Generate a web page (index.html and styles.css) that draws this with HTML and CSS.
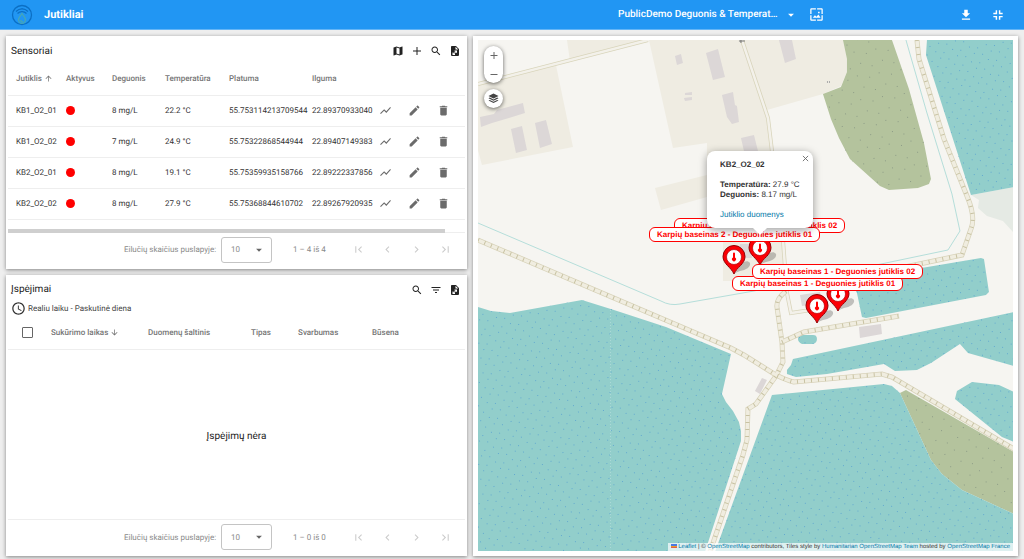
FILE: index.html
```html
<!DOCTYPE html>
<html lang="lt">
<head>
    <meta charset="UTF-8">
    <meta name="viewport" content="width=device-width, initial-scale=1.0">
    <title>Jutikliai</title>
    <link rel="stylesheet" href="styles.css">
</head>
<body>
    <!-- shared icons -->
    <svg class="sprite" aria-hidden="true">
        <symbol id="i-map" viewBox="0 0 24 24"><path d="M20.5 3l-.16.03L15 5.1 9 3 3.36 4.9c-.21.07-.36.25-.36.48V20.5c0 .28.22.5.5.5l.16-.03L9 18.9l6 2.1 5.64-1.9c.21-.07.36-.25.36-.48V3.5c0-.28-.22-.5-.5-.5zM15 19l-6-2.11V5l6 2.11V19z"/></symbol>
        <symbol id="i-add" viewBox="0 0 24 24"><path d="M20 13h-7v7h-2v-7H4v-2h7V4h2v7h7v2z"/></symbol>
        <symbol id="i-search" viewBox="0 0 24 24"><path d="M15.5 14h-.79l-.28-.27C15.41 12.59 16 11.11 16 9.5 16 5.91 13.09 3 9.5 3S3 5.91 3 9.5 5.91 16 9.5 16c1.61 0 3.09-.59 4.23-1.57l.27.28v.79l5 4.99L20.49 19l-4.99-5zm-6 0C7.01 14 5 11.99 5 9.5S7.01 5 9.5 5 14 7.01 14 9.5 11.99 14 9.5 14z"/></symbol>
        <symbol id="i-export" viewBox="0 0 24 24"><path fill-rule="evenodd" d="M6 2h8l6 6v12a2 2 0 0 1-2 2H6a2 2 0 0 1-2-2V4c0-1.100.9-2 2-2zm7 1.500V9h5.500L13 3.500zM16 11h-5v2h2l-4 4v-2H7v5h5v-2h-1.500l4-4v2H16v-5z"/></symbol>
        <symbol id="i-filter" viewBox="0 0 24 24"><path d="M10 18h4v-2h-4v2zM3 6v2h18V6H3zm3 7h12v-2H6v2z"/></symbol>
        <symbol id="i-chart" viewBox="0 0 24 24"><path d="M3.500 18.490l6-6.010 4 4L22 6.920l-1.410-1.410-7.090 7.970-4-4L2 16.990z"/></symbol>
        <symbol id="i-edit" viewBox="0 0 24 24"><path d="M3 17.250V21h3.750L17.810 9.940l-3.750-3.750L3 17.250zM20.710 7.040c.39-.39.39-1.020 0-1.410l-2.340-2.340c-.39-.39-1.020-.39-1.410 0l-1.830 1.830 3.750 3.750 1.830-1.830z"/></symbol>
        <symbol id="i-delete" viewBox="0 0 24 24"><path d="M6 19c0 1.100.9 2 2 2h8c1.100 0 2-.9 2-2V7H6v12zM19 4h-3.500l-1-1h-5l-1 1H5v2h14V4z"/></symbol>
        <symbol id="i-first" viewBox="0 0 24 24"><path d="M18.410 16.590L13.820 12l4.590-4.590L17 6l-6 6 6 6zM6 6h2v12H6z"/></symbol>
        <symbol id="i-prev" viewBox="0 0 24 24"><path d="M15.410 7.410L14 6l-6 6 6 6 1.410-1.410L10.830 12z"/></symbol>
        <symbol id="i-next" viewBox="0 0 24 24"><path d="M10 6L8.590 7.410 13.170 12l-4.580 4.590L10 18l6-6z"/></symbol>
        <symbol id="i-last" viewBox="0 0 24 24"><path d="M5.590 7.410L10.180 12l-4.590 4.590L7 18l6-6-6-6zM16 6h2v12h-2z"/></symbol>
        <symbol id="i-up" viewBox="0 0 24 24"><path d="M4 12l1.410 1.410L11 7.830V20h2V7.830l5.580 5.590L20 12l-8-8-8 8z"/></symbol>
        <symbol id="i-down" viewBox="0 0 24 24"><path d="M20 12l-1.410-1.410L13 16.170V4h-2v12.170l-5.580-5.590L4 12l8 8 8-8z"/></symbol>
        <symbol id="i-clock" viewBox="0 0 24 24"><path d="M11.990 2C6.470 2 2 6.480 2 12s4.470 10 9.990 10C17.520 22 22 17.520 22 12S17.520 2 11.990 2zM12 20c-4.420 0-8-3.580-8-8s3.580-8 8-8 8 3.580 8 8-3.580 8-8 8zm.5-13H11v6l5.250 3.150.75-1.230-4.500-2.670z"/></symbol>
        <symbol id="i-caret" viewBox="0 0 24 24"><path d="M5 9l7 7 7-7z"/></symbol>
        <symbol id="pin" viewBox="0 0 32 30">
            <path fill="#000" opacity=".22" d="M13 28l7-9c2-3 6-4 8-1 1 4-4 7-10 8z"/>
            <path fill="#fb0006" stroke="#8e0005" stroke-width="1" d="M12 29C9 22 1 19 1 11.500a11 11 0 0 1 22 0c0 7.500-8 10.500-11 17.500z"/>
            <circle cx="12" cy="12" r="7.500" fill="#fff" stroke="#b00005" stroke-width=".7"/>
            <path fill="#f00" d="M11 8.500a1 1 0 0 1 2 0v4a2 2 0 1 1-2 0z"/>
        </symbol>
    </svg>

    <header class="topbar">
        <svg class="logo" viewBox="0 0 22 22">
            <g fill="none" stroke="#0b6fc4">
                <circle cx="11" cy="11" r="9.500" stroke-width="1.300"/>
                <path stroke-width="1.200" d="M5 7.500c3.500-3.500 8.500-3.500 12 0M6.500 9.500c2.500-2.600 6.500-2.600 9 0M8.500 5.200c1.800-.6 3.600-.6 5.200 0"/>
                <path stroke="#45a6b8" stroke-width="1.300" d="M11 9.500c1.500 2.500 3.500 4.200 3.500 6.300a3.500 3.500 0 0 1-7 0c0-2.100 2-3.800 3.500-6.300zM9.500 16c.3 1.300 1.500 1.800 2.500 1.500"/>
            </g>
        </svg>
        <h1>Jutikliai</h1>
        <div class="tools">
            <div class="project">
                <select aria-label="Projektas">
                    <option>PublicDemo Deguonis &amp; Temperat…</option>
                </select>
                <svg><use href="#i-caret"/></svg>
            </div>
            <button aria-label="Vaizdas">
                <svg viewBox="0 0 24 24"><path d="M4 2h7v2H4v7H2V4c0-1.100.9-2 2-2zm9 0h7c1.100 0 2 .9 2 2v7h-2V4h-7zM2 13h2v7h7v2H4c-1.100 0-2-.9-2-2zm18 0h2v7c0 1.100-.9 2-2 2h-7v-2h7zM6 17l3.500-4 2.500 2.500 3-3.500 3.500 5zM14.500 7.500h2.500V10h-2.500z"/></svg>
            </button>
            <button class="download" aria-label="Atsisiųsti">
                <svg viewBox="0 0 24 24"><path d="M5 20h14v-2H5v2zM19 9h-4V3H9v6H5l7 7 7-7z"/></svg>
            </button>
            <button class="exit" aria-label="Išeiti iš viso ekrano">
                <svg viewBox="0 0 24 24"><path d="M4 16h4v4h2.500v-6.500H4zM8 8H4v2.500h6.500V4H8zm5.500 12H16v-4h4v-2.500h-6.500zM16 8V4h-2.500v6.500H20V8z"/></svg>
            </button>
        </div>
    </header>

    <main>
        <div class="left">
            <section class="panel sensors">
                <div class="panel-head">
                    <h2>Sensoriai</h2>
                    <button aria-label="Žemėlapis"><svg><use href="#i-map"/></svg></button>
                    <button aria-label="Pridėti"><svg><use href="#i-add"/></svg></button>
                    <button aria-label="Ieškoti"><svg><use href="#i-search"/></svg></button>
                    <button aria-label="Eksportuoti"><svg><use href="#i-export"/></svg></button>
                </div>
                <table class="sensor-table">
                    <thead>
                        <tr>
                            <th class="c-name">Jutiklis <svg><use href="#i-up"/></svg></th>
                            <th class="c-active">Aktyvus</th>
                            <th class="c-oxygen">Deguonis</th>
                            <th class="c-temp">Temperatūra</th>
                            <th class="c-lat">Platuma</th>
                            <th class="c-lng">Ilguma</th>
                            <th class="c-actions"></th>
                        </tr>
                    </thead>
                    <tbody id="sensor-rows"></tbody>
                </table>
                <div class="scrollbar"><div class="thumb"></div></div>
                <div class="pager">
                    <label for="rows1">Eilučių skaičius puslapyje:</label>
                    <div class="rows">
                        <select id="rows1"><option>10</option></select>
                        <svg><use href="#i-caret"/></svg>
                    </div>
                    <span class="range">1 – 4 iš 4</span>
                    <button aria-label="Pirmas" disabled><svg><use href="#i-first"/></svg></button>
                    <button aria-label="Ankstesnis" disabled><svg><use href="#i-prev"/></svg></button>
                    <button aria-label="Kitas" disabled><svg><use href="#i-next"/></svg></button>
                    <button aria-label="Paskutinis" disabled><svg><use href="#i-last"/></svg></button>
                </div>
            </section>

            <section class="panel alerts">
                <div class="panel-head">
                    <h2>Įspėjimai</h2>
                    <button aria-label="Ieškoti"><svg><use href="#i-search"/></svg></button>
                    <button aria-label="Filtruoti"><svg><use href="#i-filter"/></svg></button>
                    <button aria-label="Eksportuoti"><svg><use href="#i-export"/></svg></button>
                </div>
                <div class="period"><svg><use href="#i-clock"/></svg>Realiu laiku - Paskutinė diena</div>
                <table class="alert-table">
                    <thead>
                        <tr>
                            <th class="a-check"><input type="checkbox" aria-label="Pažymėti visus"></th>
                            <th class="a-time">Sukūrimo laikas <svg><use href="#i-down"/></svg></th>
                            <th class="a-source">Duomenų šaltinis</th>
                            <th class="a-type">Tipas</th>
                            <th class="a-level">Svarbumas</th>
                            <th class="a-state">Būsena</th>
                        </tr>
                    </thead>
                </table>
                <p class="empty">Įspėjimų nėra</p>
                <div class="pager">
                    <label for="rows2">Eilučių skaičius puslapyje:</label>
                    <div class="rows">
                        <select id="rows2"><option>10</option></select>
                        <svg><use href="#i-caret"/></svg>
                    </div>
                    <span class="range">1 – 0 iš 0</span>
                    <button aria-label="Pirmas" disabled><svg><use href="#i-first"/></svg></button>
                    <button aria-label="Ankstesnis" disabled><svg><use href="#i-prev"/></svg></button>
                    <button aria-label="Kitas" disabled><svg><use href="#i-next"/></svg></button>
                    <button aria-label="Paskutinis" disabled><svg><use href="#i-last"/></svg></button>
                </div>
            </section>
        </div>

        <section class="panel map-panel">
            <div class="map">
                <svg class="tiles" viewBox="478 40 535 511" preserveAspectRatio="xMidYMid slice">
                    <defs>
                        <pattern id="dots" width="17" height="15" patternUnits="userSpaceOnUse" patternTransform="rotate(-8)">
                            <g fill="#62a9cf">
                                <rect x="1" y="1" width="1" height="1"/>
                                <rect x="9" y="3" width="1" height="1"/>
                                <rect x="5" y="8" width="1" height="1"/>
                                <rect x="13" y="10" width="1" height="1"/>
                            </g>
                        </pattern>
                        <pattern id="trees" width="22" height="24" patternUnits="userSpaceOnUse" patternTransform="rotate(-8)">
                            <g fill="#8c9b86">
                                <rect x="2" y="2" width="1" height="1"/>
                                <rect x="14" y="5" width="1" height="1"/>
                                <rect x="7" y="14" width="1" height="1"/>
                                <rect x="18" y="18" width="1" height="1"/>
                            </g>
                        </pattern>
                        <path id="channels" d="M927 40H1014V187L971 195 926 55z
                            M478 307L491 311 510 313 582 300 614 310 666 327 731 354 722 394 726 402 733 411 739 422 741 431V441L705 552H478z
                            M772 395L884 384 892 386 900 393 931 460 942 474 962 490 1014 514V552H715z
                            M1014 392L999 385 972 382 957 391 955 399 1002 437 1014 442z
                            M793 359L1014 312V366L968 353 960 344 931 363 917 370 895 371 884 364 827 374 796 377 787 374V370L791 365z
                            M850 280L981 258 984 259 989 292 986 295 866 318 862 317 857 293z
                            M802 335H813Q817 335 817 339T813 344H802Q798 342 798 339T802 335z"/>
                        <path id="woods" d="M843 40H892L909 89 924 143 931 179 929 184 918 188 889 190 880 186 850 159 839 138 831 119 823 94 841 87 847 72V59z
                            M900 393L906 390 1014 452V514L962 490 942 474 931 460z"/>
                        <g id="tracks" fill="none">
                            <path d="M478 240L731 348 744 355 776 375Q786 380 794 382L882 374 892 377 1014 449"/>
                            <path d="M786 291Q776 299 777 307L782 342 783 362 776 376 756 404 748 409 747 440 743 455 710 552"/>
                            <path d="M782 342L804 332 899 316"/>
                            <path d="M917 40L919 59 944 139 967 196Q976 217 971 229L962 255 905 267"/>
                        </g>
                        <g id="lanes" fill="none">
                            <path d="M478 84L648 40"/>
                            <path d="M742 40L768 118 772 151 783 240 787 293 791 313 811 310"/>
                        </g>
                    </defs>
                    <rect x="478" y="40" width="536" height="512" fill="#f6f5f1"/>
                    <path fill="#efece2" d="M567 40H648L570 61z M478 84L556 65 573 147 482 165 478 150z
                        M649 40H843L847 59V72L841 86 823 94 767 110 773 160H707V143L673 148z M655 188L707 175V197L661 210z
                        M723 242H783L786 275 755 281H723z"/>
                    <path fill="#e5eae4" d="M1014 187L971 195 979 200 978 208 987 216 1003 221 1014 233z"/>
                    <use href="#woods" fill="#b4c39d"/>
                    <use href="#woods" fill="url(#trees)"/>
                    <use href="#channels" fill="#92cecb"/>
                    <use href="#channels" fill="url(#dots)"/>
                    <path stroke="#fff" stroke-opacity=".25" stroke-dasharray="1 2" d="M610.500 310V552"/>
                    <path fill="none" stroke="#b5deda" d="M478 223L661 301Q670 306 680 304L754 291 850 270 881 264 948 250 960 231 952 194 927 113 906 40"/>
                    <path fill="#dcd7d7" d="M675 56L681 54 683 63 677 65z M706 53L718 49 725 77 713 80z M722 95L733 92 735 105 737 106 739 122 732 124 727 117z
                        M685 93L692 92V95L685 95z M684 98L692 97V100L685 101z M741 138L754 135 758 151H744z
                        M480 117L494 114 497 110 523 103 525 113 509 118 492 123 481 127z M511 129L522 126 527 150 516 153z M535 123L546 120 552 144 540 148z
                        M779 40H792L796 59 785 63z M800 295L820 292 822 303 802 306z M859 327L881 324 882 334 860 338z M762 378L767 380 760 394 755 391z
                        M740 244H752V258H740z"/>
                    <use href="#lanes" stroke="#d8d4ba" stroke-width="4"/>
                    <use href="#lanes" stroke="#f3f1ea" stroke-width="2.500"/>
                    <use href="#tracks" stroke="#d8d3ba" stroke-width="5"/>
                    <use href="#tracks" stroke="#f0ede0" stroke-width="3.500"/>
                    <use href="#tracks" stroke="#c8c2a2" stroke-width="4" stroke-dasharray="1 6"/>
                    <path stroke="#777" d="M739 41H745M741 40V43"/>
                    <path stroke="#aaa" stroke-width="2" stroke-dasharray="1 1" d="M827 82H831"/>
                </svg>

                <svg class="pin p1"><use href="#pin"/></svg>
                <svg class="pin p2"><use href="#pin"/></svg>
                <svg class="pin p3"><use href="#pin"/></svg>
                <svg class="pin p4"><use href="#pin"/></svg>
                <div class="tag t1">Karpių baseinas 2 - Deguonies jutiklis 02</div>
                <div class="tag t2">Karpių baseinas 2 - Deguonies jutiklis 01</div>
                <div class="tag t4">Karpių baseinas 1 - Deguonies jutiklis 01</div>
                <div class="tag t3">Karpių baseinas 1 - Deguonies jutiklis 02</div>

                <div class="popup">
                    <button class="close" aria-label="Uždaryti"><svg viewBox="0 0 8 8"><path d="M1 1l6 6M7 1L1 7"/></svg></button>
                    <strong>KB2_O2_02</strong>
                    <p><b>Temperatūra:</b> 27.9 °C<br><b>Deguonis:</b> 8.17 mg/L</p>
                    <a href="#">Jutiklio duomenys</a>
                </div>

                <div class="controls">
                    <div class="zoom">
                        <button aria-label="Priartinti"><svg viewBox="0 0 8 8"><path d="M4 1v7M0.500 4.500h7"/></svg></button>
                        <button aria-label="Atitolinti"><svg viewBox="0 0 8 8"><path d="M0.500 4.500h7"/></svg></button>
                    </div>
                    <button class="layers" aria-label="Sluoksniai">
                        <svg viewBox="0 0 24 24"><path d="M12 1l11 5.500L12 12 1 6.500zM4 10l8 4 8-4 3 1.500-11 5.500L1 11.500zM4 15l8 4 8-4 3 1.500L12 22 1 16.500z"/></svg>
                    </button>
                </div>

                <div class="attribution">
                    <svg viewBox="0 0 12 8"><path fill="#4c7be1" d="M0 0h12v4H0z"/><path fill="#ffd500" d="M0 4h12v3H0z"/><path fill="#e0604c" d="M0 5h12v3H0z"/></svg>
                    <a href="#">Leaflet</a> | © <a href="#">OpenStreetMap</a> contributors, Tiles style by <a href="#">Humanitarian OpenStreetMap Team</a> hosted by <a href="#">OpenStreetMap France</a>
                </div>
            </div>
        </section>
    </main>

    <script>
        const sensors = [
            ['KB1_O2_01', '8 mg/L', '22.2 °C', '55.753114213709544', '22.89370933040'],
            ['KB1_O2_02', '7 mg/L', '24.9 °C', '55.75322868544944', '22.89407149383'],
            ['KB2_O2_01', '8 mg/L', '19.1 °C', '55.75359935158766', '22.89222337856'],
            ['KB2_O2_02', '8 mg/L', '27.9 °C', '55.75368844610702', '22.89267920935']
        ];

        document.getElementById('sensor-rows').innerHTML = sensors.map(([name, oxygen, temp, lat, lng]) => `
            <tr>
                <td>${name}</td>
                <td><span class="dot"></span></td>
                <td>${oxygen}</td>
                <td>${temp}</td>
                <td>${lat}</td>
                <td>${lng}</td>
                <td>
                    <div class="actions">
                        <button aria-label="Grafikas"><svg><use href="#i-chart"/></svg></button>
                        <button aria-label="Redaguoti"><svg><use href="#i-edit"/></svg></button>
                        <button aria-label="Ištrinti"><svg><use href="#i-delete"/></svg></button>
                    </div>
                </td>
            </tr>`).join('');
    </script>
</body>
</html>
```
FILE: styles.css
```css
* {
    margin: 0;
    padding: 0;
    box-sizing: border-box;
}

body {
    font-family: Roboto, "Liberation Sans", sans-serif;
    font-size: 8px;
    text-rendering: geometricPrecision;
    color: #333;
    background: #eee;
    min-height: 100vh;
    display: flex;
    flex-direction: column;
}

button {
    display: flex;
    align-items: center;
    justify-content: center;
    background: none;
    border: none;
    color: inherit;
    cursor: pointer;
}

svg {
    display: block;
    fill: currentColor;
}

select {
    appearance: none;
    background: none;
    border: none;
    color: inherit;
    font: inherit;
    text-rendering: inherit;
    outline: none;
}

.sprite {
    position: absolute;
    width: 0;
    height: 0;
}

/* top bar */
.topbar {
    display: flex;
    align-items: center;
    height: 30px;
    padding: 0 19px 0 11px;
    background: #2196f3;
    border-bottom: 1px solid #64b5f6;
    color: #fff;
}

.logo {
    width: 22px;
    height: 22px;
}

.topbar h1 {
    margin-left: 11px;
    font-size: 11px;
    font-weight: 700;
}

.tools {
    flex: 1;
    display: flex;
    align-items: center;
    justify-content: flex-end;
}

.tools button svg {
    width: 15px;
    height: 15px;
}

.project {
    display: flex;
    align-items: center;
    gap: 6px;
    margin-right: 13px;
}

.project select {
    width: 162px;
    font-size: 10px;
    font-weight: 500;
}

.project svg {
    width: 10px;
    height: 10px;
}

.tools .download {
    margin-left: 135px;
}

.tools .exit {
    margin-left: 18px;
}

.tools .download svg,
.tools .exit svg {
    width: 14px;
    height: 14px;
}

/* layout */
main {
    flex: 1;
    display: grid;
    grid-template-columns: 11fr 13fr;
    gap: 6px;
    padding: 6px 6px 3px;
}

.left {
    display: flex;
    flex-direction: column;
    gap: 6px;
}

.panel {
    background: #fff;
    box-shadow: 0 1px 4px rgba(0, 0, 0, 0.45);
}

.sensors,
.alerts {
    display: flex;
    flex-direction: column;
    padding: 0 2px;
}

.alerts {
    flex: 1;
}

.panel-head {
    display: flex;
    align-items: center;
    gap: 7px;
    height: 30px;
    padding: 0 4px 0 3px;
    color: #222;
}

.panel-head h2 {
    flex: 1;
    font-size: 10px;
    font-weight: 400;
}

.panel-head svg {
    width: 12px;
    height: 12px;
}

/* tables */
table {
    width: 100%;
    table-layout: fixed;
    border-collapse: collapse;
}

th,
td {
    padding-left: 8px;
    text-align: left;
    white-space: nowrap;
    border-bottom: 1px solid #eee;
}

th {
    font-weight: 500;
    color: #757575;
}

th svg {
    display: inline-block;
    width: 9px;
    height: 9px;
    vertical-align: bottom;
}

.sensor-table th {
    height: 29px;
    padding-bottom: 4px;
}

.sensor-table td {
    height: 31px;
}

.c-name { width: 50px; }
.c-active { width: 46px; }
.c-oxygen { width: 53px; }
.c-temp { width: 64px; }
.c-lat { width: 83px; }
.c-lng { width: 67px; }
.c-actions { width: 94px; }

.dot {
    display: block;
    width: 9px;
    height: 9px;
    border-radius: 50%;
    background: #f00;
}

.actions {
    display: flex;
    gap: 16px;
    color: #6b6b6b;
}

.actions svg {
    width: 13px;
    height: 13px;
}

.scrollbar {
    height: 4px;
    margin-top: 9px;
    border-bottom: 1px solid #eee;
}

.thumb {
    width: 437px;
    height: 4px;
    background: #cfcfcf;
}

/* pager */
.pager {
    display: flex;
    align-items: center;
    justify-content: flex-end;
    height: 36px;
    padding: 0 13px 2px 0;
    color: #8a8a8a;
}

.rows {
    display: flex;
    align-items: center;
    width: 51px;
    height: 26px;
    margin: 0 21px 0 5px;
    padding: 0 7px 0 9px;
    border: 1px solid #c4c4c4;
    border-radius: 3px;
}

.rows select {
    flex: 1;
    min-width: 0;
}

.rows svg {
    width: 10px;
    height: 10px;
    color: #666;
}

.range {
    width: 59px;
}

.pager button {
    margin-left: 16px;
    color: #ccc;
}

.pager .range + button {
    margin-left: 0;
}

.pager button svg {
    width: 13px;
    height: 13px;
}

/* alerts */
.period {
    display: flex;
    align-items: center;
    gap: 2px;
    height: 8px;
    padding-left: 3px;
    color: #444;
}

.period svg {
    width: 15px;
    height: 15px;
    color: #333;
}

.alert-table {
    margin-top: 4px;
}

.alert-table th {
    height: 33px;
}

.a-check { width: 35px; }
.a-time { width: 97px; }
.a-source { width: 103px; }
.a-type { width: 47px; }
.a-level { width: 74px; }
.a-state { width: 101px; }

.alert-table input {
    appearance: none;
    display: block;
    width: 11px;
    height: 11px;
    margin-left: 6px;
    border: 1px solid #666;
    border-radius: 1px;
}

.empty {
    flex: 1;
    display: flex;
    align-items: center;
    justify-content: center;
    padding-top: 4px;
    font-size: 10px;
    color: #222;
}

.alerts .pager {
    height: 37px;
    border-top: 1px solid #eee;
}

/* map */
.map-panel {
    display: flex;
    padding: 4px 5px 5px;
}

.map {
    flex: 1;
    position: relative;
    overflow: hidden;
    font-family: "Liberation Sans", Arial, sans-serif;
}

.tiles {
    position: absolute;
    width: 100%;
    height: 100%;
}

.pin {
    position: absolute;
    width: 32px;
    height: 30px;
}

.p1 { left: 270px; top: 196px; }
.p2 { left: 244px; top: 205px; }
.p3 { left: 348px; top: 242px; }
.p4 { left: 327px; top: 254px; }

.tag {
    position: absolute;
    width: 171px;
    height: 15px;
    line-height: 13px;
    border: 1px solid #f00;
    border-radius: 6px;
    background: #fff;
    color: #f00;
    font-size: 8px;
    font-weight: 700;
    text-align: center;
    white-space: nowrap;
}

.t1 { left: 196px; top: 178px; }
.t2 { left: 171px; top: 187px; }
.t3 { left: 274px; top: 224px; }
.t4 { left: 254px; top: 236px; }

.popup {
    position: absolute;
    left: 229px;
    top: 111px;
    width: 106px;
    padding: 9px 0 8px 13px;
    border-radius: 8px;
    background: #fff;
    box-shadow: 0 2px 8px rgba(0, 0, 0, 0.4);
    line-height: 10px;
    white-space: nowrap;
}

.popup::after {
    content: "";
    position: absolute;
    left: 46px;
    top: 100%;
    border: 7px solid transparent;
    border-top-color: #fff;
    border-bottom: none;
}

.popup p {
    margin: 10px 0;
}

.popup a,
.attribution a {
    color: #0078a8;
    text-decoration: none;
}

.close {
    position: absolute;
    right: 4px;
    top: 4px;
}

.close svg {
    width: 7px;
    height: 7px;
}

.close svg,
.zoom svg {
    fill: none;
    stroke: #666;
}

.controls {
    position: absolute;
    left: 6px;
    top: 6px;
    display: flex;
    flex-direction: column;
    gap: 6px;
}

.zoom,
.layers {
    width: 19px;
    border-radius: 10px;
    background: #fff;
    box-shadow: 0 1px 4px rgba(0, 0, 0, 0.6);
}

.zoom button {
    width: 19px;
    height: 18px;
}

.zoom button + button {
    height: 19px;
}

.zoom svg {
    width: 8px;
    height: 8px;
}

.layers {
    height: 19px;
    color: #444;
}

.layers svg {
    width: 11px;
    height: 11px;
}

.attribution {
    position: absolute;
    right: 0;
    bottom: 0;
    padding: 0 3px;
    background: rgba(255, 255, 255, 0.7);
    font-size: 6px;
    line-height: 8px;
    color: #333;
}

.attribution svg {
    display: inline-block;
    width: 6px;
    height: 4px;
}
```
